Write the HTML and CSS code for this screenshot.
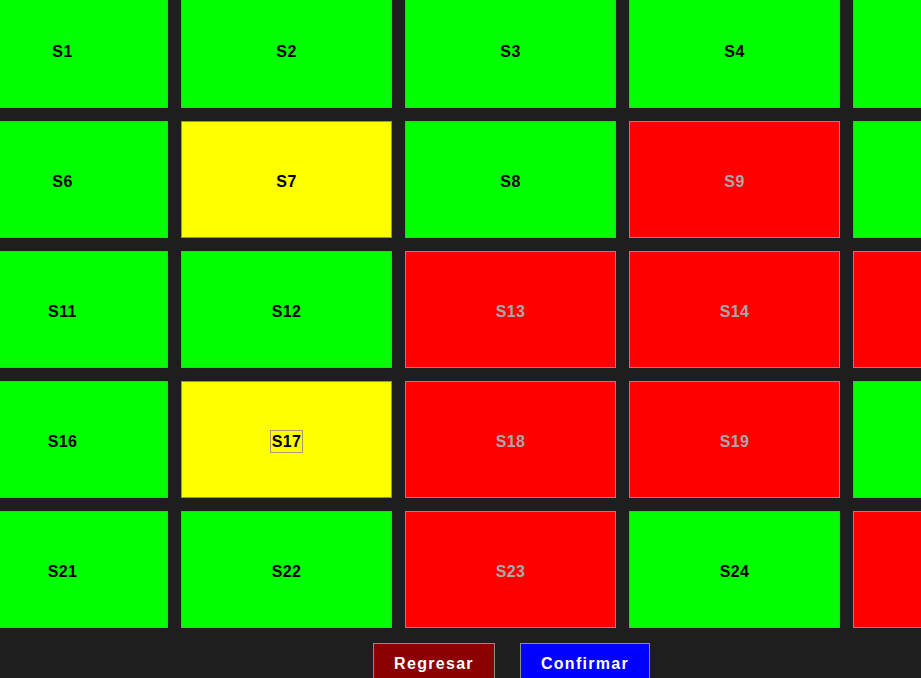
FILE: index.html
```html
<!DOCTYPE html>
<html lang="es">
<head>
<meta charset="utf-8">
<title>Asientos</title>
<link rel="stylesheet" href="styles.css">
</head>
<body>
<div class="grid">
  <div class="seat free"><span>S1</span></div>
  <div class="seat free"><span>S2</span></div>
  <div class="seat free"><span>S3</span></div>
  <div class="seat free"><span>S4</span></div>
  <div class="seat free"><span>S5</span></div>
  <div class="seat free"><span>S6</span></div>
  <div class="seat selected"><span>S7</span></div>
  <div class="seat free"><span>S8</span></div>
  <div class="seat taken"><span>S9</span></div>
  <div class="seat free"><span>S10</span></div>
  <div class="seat free"><span>S11</span></div>
  <div class="seat free"><span>S12</span></div>
  <div class="seat taken"><span>S13</span></div>
  <div class="seat taken"><span>S14</span></div>
  <div class="seat taken"><span>S15</span></div>
  <div class="seat free"><span>S16</span></div>
  <div class="seat selected"><span class="focus">S17</span></div>
  <div class="seat taken"><span>S18</span></div>
  <div class="seat taken"><span>S19</span></div>
  <div class="seat free"><span>S20</span></div>
  <div class="seat free"><span>S21</span></div>
  <div class="seat free"><span>S22</span></div>
  <div class="seat taken"><span>S23</span></div>
  <div class="seat free"><span>S24</span></div>
  <div class="seat taken"><span>S25</span></div>
</div>
<div class="actions">
  <button class="btn back">Regresar</button>
  <button class="btn confirm">Confirmar</button>
</div>
</body>
</html>
```

FILE: styles.css
```css
html, body {
  margin: 0;
  padding: 0;
  background: #1e1e1e;
  overflow: hidden;
  width: 921px;
  height: 678px;
  font-family: "Liberation Sans", Arial, sans-serif;
}

.grid {
  display: grid;
  grid-template-columns: repeat(5, 211px);
  grid-auto-rows: 117px;
  column-gap: 13px;
  row-gap: 13px;
  margin: -9px 0 0 -43px;
  width: max-content;
}

.seat {
  box-sizing: border-box;
  border: 1px solid #8c8c8c;
  display: flex;
  align-items: center;
  justify-content: center;
  font-size: 16px;
  font-weight: bold;
  letter-spacing: 0.4px;
  color: #000;
}

.seat span {
  padding: 2px 1px 1px 1px;
  margin-top: 4px;
}

.free { background: #00ff00; }
.selected { background: #ffff00; }
.taken { background: #ff0000; color: #a9a9a9; }

.focus {
  outline: 1px solid #a0a080;
}

.actions {
  display: flex;
  gap: 25px;
  padding: 15px 0 0 373px;
}

.btn {
  box-sizing: border-box;
  height: 42px;
  border: 1px solid #8c8c8c;
  color: #fff;
  font-family: "Liberation Sans", Arial, sans-serif;
  font-size: 16px;
  font-weight: bold;
  letter-spacing: 1.3px;
  padding: 0;
  margin: 0;
}

.back { background: #8b0000; width: 122px; }
.confirm { background: #0000ff; width: 130px; }
```
